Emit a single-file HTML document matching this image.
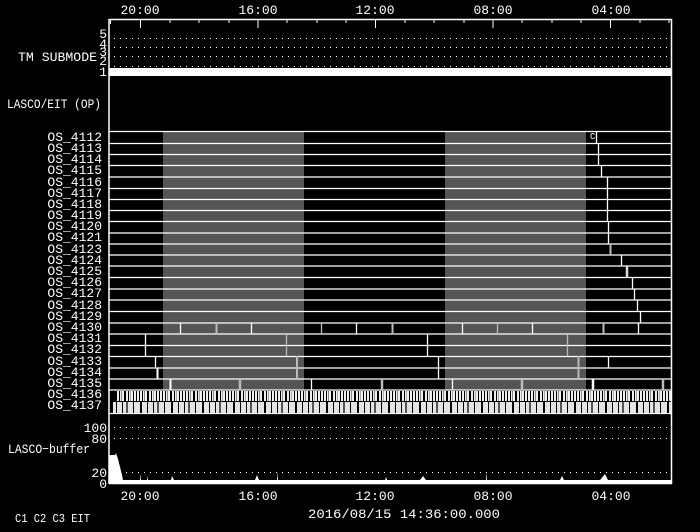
<!DOCTYPE html>
<html><head><meta charset="utf-8"><style>
html,body{margin:0;padding:0;background:#000;}
svg{display:block;}
text{font-family:"Liberation Mono","DejaVu Sans Mono",monospace;font-size:13px;fill:#fff;}
</style></head><body>
<svg width="700" height="532" viewBox="0 0 700 532" xmlns="http://www.w3.org/2000/svg">
<defs>
<pattern id="pa" x="116" y="0" width="23" height="20" patternUnits="userSpaceOnUse">
<rect width="23" height="20" fill="#f0f0f0"/>
<rect x="0" width="1" height="20" fill="#000"/><rect x="3" width="1" height="20" fill="#000"/>
<rect x="5" width="1" height="20" fill="#888"/><rect x="8" width="2" height="20" fill="#000"/>
<rect x="12" width="1" height="20" fill="#000"/><rect x="14" width="1" height="20" fill="#aaa"/>
<rect x="17" width="1" height="20" fill="#000"/><rect x="20" width="1" height="20" fill="#000"/>
</pattern>
<pattern id="pb" x="109" y="0" width="31" height="20" patternUnits="userSpaceOnUse">
<rect width="31" height="20" fill="#e4e4e4"/>
<rect x="0" width="2" height="20" fill="#000"/><rect x="7" width="1" height="20" fill="#000"/>
<rect x="13" width="1" height="20" fill="#000"/><rect x="17" width="2" height="20" fill="#555"/>
<rect x="24" width="1" height="20" fill="#000"/>
</pattern>
</defs>
<text x="140" y="14" text-anchor="middle">20:00</text>
<text x="258" y="14" text-anchor="middle">16:00</text>
<text x="375" y="14" text-anchor="middle">12:00</text>
<text x="493" y="14" text-anchor="middle">08:00</text>
<text x="611" y="14" text-anchor="middle">04:00</text>
<g stroke="#fff" stroke-width="1.5" fill="none">
<line x1="109" y1="19.5" x2="672" y2="19.5"/>
<line x1="109" y1="19" x2="109" y2="484"/>
<line x1="671.5" y1="19" x2="671.5" y2="484"/>
<line x1="109" y1="483.5" x2="672" y2="483.5"/>
</g>
<g stroke="#fff" stroke-width="1">
<line x1="140.5" y1="19" x2="140.5" y2="28"/><line x1="258" y1="19" x2="258" y2="28"/>
<line x1="375.5" y1="19" x2="375.5" y2="28"/><line x1="493" y1="19" x2="493" y2="28"/>
<line x1="610.5" y1="19" x2="610.5" y2="28"/><line x1="110.5" y1="19" x2="110.5" y2="24"/>
<line x1="170" y1="19" x2="170" y2="23"/><line x1="199" y1="19" x2="199" y2="23"/><line x1="229" y1="19" x2="229" y2="23"/>
<line x1="287" y1="19" x2="287" y2="23"/><line x1="317" y1="19" x2="317" y2="23"/><line x1="346" y1="19" x2="346" y2="23"/>
<line x1="405" y1="19" x2="405" y2="23"/><line x1="434" y1="19" x2="434" y2="23"/><line x1="464" y1="19" x2="464" y2="23"/>
<line x1="522" y1="19" x2="522" y2="23"/><line x1="552" y1="19" x2="552" y2="23"/><line x1="581" y1="19" x2="581" y2="23"/>
<line x1="640" y1="19" x2="640" y2="23"/><line x1="669" y1="19" x2="669" y2="23"/>
</g>
<g stroke="#fff" stroke-width="1" stroke-dasharray="1 5">
<line x1="114" y1="38.5" x2="671" y2="38.5"/><line x1="114" y1="47.5" x2="671" y2="47.5"/>
<line x1="114" y1="56.5" x2="671" y2="56.5"/><line x1="114" y1="66.5" x2="671" y2="66.5"/>
<line x1="114" y1="427.5" x2="671" y2="427.5"/><line x1="114" y1="438.5" x2="671" y2="438.5"/>
<line x1="114" y1="472.5" x2="671" y2="472.5"/>
</g>
<rect x="109" y="68" width="563" height="8" fill="#fff"/>
<g style="font-size:11px">
<text x="107" y="38" text-anchor="end">5</text><text x="107" y="48" text-anchor="end">4</text>
<text x="107" y="56" text-anchor="end">3</text><text x="107" y="65" text-anchor="end">2</text>
<text x="107" y="76" text-anchor="end">1</text>
</g>
<text x="18" y="61" textLength="79" lengthAdjust="spacingAndGlyphs">TM SUBMODE</text>
<text x="7" y="108" textLength="94" lengthAdjust="spacingAndGlyphs">LASCO/EIT (OP)</text>
<rect x="163" y="131" width="141" height="259" fill="#555"/>
<rect x="445" y="131" width="141" height="259" fill="#555"/>
<g stroke="#fff" stroke-width="1.3">
<line x1="109" y1="131.5" x2="671" y2="131.5"/><line x1="109" y1="143.5" x2="671" y2="143.5"/>
<line x1="109" y1="154.5" x2="671" y2="154.5"/><line x1="109" y1="165.5" x2="671" y2="165.5"/>
<line x1="109" y1="177" x2="671" y2="177"/><line x1="109" y1="188.5" x2="671" y2="188.5"/>
<line x1="109" y1="199.5" x2="671" y2="199.5"/><line x1="109" y1="210.5" x2="671" y2="210.5"/>
<line x1="109" y1="221.5" x2="671" y2="221.5"/><line x1="109" y1="233" x2="671" y2="233"/>
<line x1="109" y1="244" x2="671" y2="244"/><line x1="109" y1="255" x2="671" y2="255"/>
<line x1="109" y1="266" x2="671" y2="266"/><line x1="109" y1="277.5" x2="671" y2="277.5"/>
<line x1="109" y1="289" x2="671" y2="289"/><line x1="109" y1="300" x2="671" y2="300"/>
<line x1="109" y1="311.5" x2="671" y2="311.5"/><line x1="109" y1="323" x2="671" y2="323"/>
<line x1="109" y1="334" x2="671" y2="334"/><line x1="109" y1="345.5" x2="671" y2="345.5"/>
<line x1="109" y1="356.5" x2="671" y2="356.5"/><line x1="109" y1="368" x2="671" y2="368"/>
<line x1="109" y1="379" x2="671" y2="379"/><line x1="109" y1="390" x2="671" y2="390"/>
<line x1="109" y1="413.5" x2="671" y2="413.5"/>
</g>
<g stroke="#fff" stroke-width="1.3">
<line x1="596.5" y1="131" x2="596.5" y2="143"/>
<line x1="598.5" y1="143" x2="598.5" y2="154"/><line x1="598.5" y1="154" x2="598.5" y2="165"/>
<line x1="601.5" y1="165" x2="601.5" y2="177"/>
<line x1="607.5" y1="177" x2="607.5" y2="221"/>
<line x1="608.5" y1="221" x2="608.5" y2="244"/>
<line x1="621.5" y1="255" x2="621.5" y2="266"/>
<line x1="632.5" y1="277" x2="632.5" y2="289"/>
<line x1="634.5" y1="289" x2="634.5" y2="300"/>
<line x1="637.5" y1="300" x2="637.5" y2="311"/>
<line x1="640.5" y1="311" x2="640.5" y2="323"/>
<line x1="180.5" y1="323" x2="180.5" y2="334"/><line x1="251.5" y1="323" x2="251.5" y2="334"/>
<line x1="356.5" y1="323" x2="356.5" y2="334"/><line x1="462.5" y1="323" x2="462.5" y2="334"/>
<line x1="532.5" y1="323" x2="532.5" y2="334"/><line x1="638.5" y1="323" x2="638.5" y2="334"/>
<line x1="145.5" y1="334" x2="145.5" y2="356"/><line x1="427.5" y1="334" x2="427.5" y2="356"/>
<line x1="155.5" y1="356" x2="155.5" y2="368"/><line x1="438.5" y1="356" x2="438.5" y2="379"/>
<line x1="608.5" y1="356" x2="608.5" y2="368"/>
<line x1="157.5" y1="368" x2="157.5" y2="379" stroke-width="2"/>
<line x1="170.5" y1="379" x2="170.5" y2="390" stroke-width="2"/><line x1="311.5" y1="379" x2="311.5" y2="390"/>
<line x1="452.5" y1="379" x2="452.5" y2="390"/><line x1="593" y1="379" x2="593" y2="390" stroke-width="2.5"/>
</g>
<g stroke="#bbb" stroke-width="1.3">
<line x1="610.5" y1="244" x2="610.5" y2="255" stroke-width="2"/>
<line x1="627" y1="266" x2="627" y2="277" stroke-width="2.5" stroke="#ddd"/>
<line x1="216.5" y1="323" x2="216.5" y2="334" stroke-width="2"/><line x1="321.5" y1="323" x2="321.5" y2="334"/>
<line x1="392.5" y1="323" x2="392.5" y2="334" stroke-width="2"/><line x1="497.5" y1="323" x2="497.5" y2="334"/>
<line x1="603.5" y1="323" x2="603.5" y2="334" stroke-width="2"/>
<line x1="286.5" y1="334" x2="286.5" y2="356"/><line x1="567.5" y1="334" x2="567.5" y2="356"/>
<line x1="297" y1="356" x2="297" y2="379" stroke-width="2"/><line x1="578.5" y1="356" x2="578.5" y2="379" stroke-width="2"/>
<line x1="240" y1="379" x2="240" y2="390" stroke-width="2.5"/><line x1="382" y1="379" x2="382" y2="390" stroke-width="2.5"/>
<line x1="522" y1="379" x2="522" y2="390" stroke-width="2.5"/><line x1="663" y1="379" x2="663" y2="390" stroke-width="2.5"/>
</g>
<text x="590" y="139" style="font-size:9px">C</text>
<rect x="116" y="391" width="555" height="10" fill="url(#pa)"/>
<rect x="113" y="402" width="558" height="11" fill="url(#pb)"/>
<g text-anchor="end">
<text x="102" y="141">OS_4112</text><text x="102" y="152">OS_4113</text><text x="102" y="163">OS_4114</text>
<text x="102" y="174">OS_4115</text><text x="102" y="186">OS_4116</text><text x="102" y="197">OS_4117</text>
<text x="102" y="208">OS_4118</text><text x="102" y="219">OS_4119</text><text x="102" y="230">OS_4120</text>
<text x="102" y="241">OS_4121</text><text x="102" y="253">OS_4123</text><text x="102" y="264">OS_4124</text>
<text x="102" y="275">OS_4125</text><text x="102" y="286">OS_4126</text><text x="102" y="297">OS_4127</text>
<text x="102" y="309">OS_4128</text><text x="102" y="320">OS_4129</text><text x="102" y="331">OS_4130</text>
<text x="102" y="342">OS_4131</text><text x="102" y="353">OS_4132</text><text x="102" y="365">OS_4133</text>
<text x="102" y="376">OS_4134</text><text x="102" y="387">OS_4135</text><text x="102" y="398">OS_4136</text>
<text x="102" y="409">OS_4137</text>
</g>
<text x="107" y="432" text-anchor="end">100</text>
<text x="107" y="443" text-anchor="end">80</text>
<text x="8" y="453" textLength="82" lengthAdjust="spacingAndGlyphs">LASCO−buffer</text>
<text x="107" y="477" text-anchor="end">20</text>
<text x="107" y="488" text-anchor="end">0</text>
<polygon fill="#fff" points="109,483 109,455 115,455 116,453 117,456 118,459 119,463 120,467 121,471 122,475 123,480 140,480 140,474 141,480 147,480 147,476 148,480 171,480 172,476 174,480 255,480 257,475 259,480 277,480 277,472 278,480 385,480 386,477 387,480 420,480 423,476 426,480 486,480 486,472 487,480 560,480 562,476 564,480 600,480 605,474 608,480 671,480 671,483"/>
<text x="140" y="500" text-anchor="middle">20:00</text>
<text x="258" y="500" text-anchor="middle">16:00</text>
<text x="375" y="500" text-anchor="middle">12:00</text>
<text x="493" y="500" text-anchor="middle">08:00</text>
<text x="611" y="500" text-anchor="middle">04:00</text>
<text x="308" y="518" textLength="192" lengthAdjust="spacingAndGlyphs">2016/08/15 14:36:00.000</text>
<text x="15" y="522" style="font-size:12px" textLength="75" lengthAdjust="spacingAndGlyphs">C1 C2 C3 EIT</text>
</svg>
</body></html>
